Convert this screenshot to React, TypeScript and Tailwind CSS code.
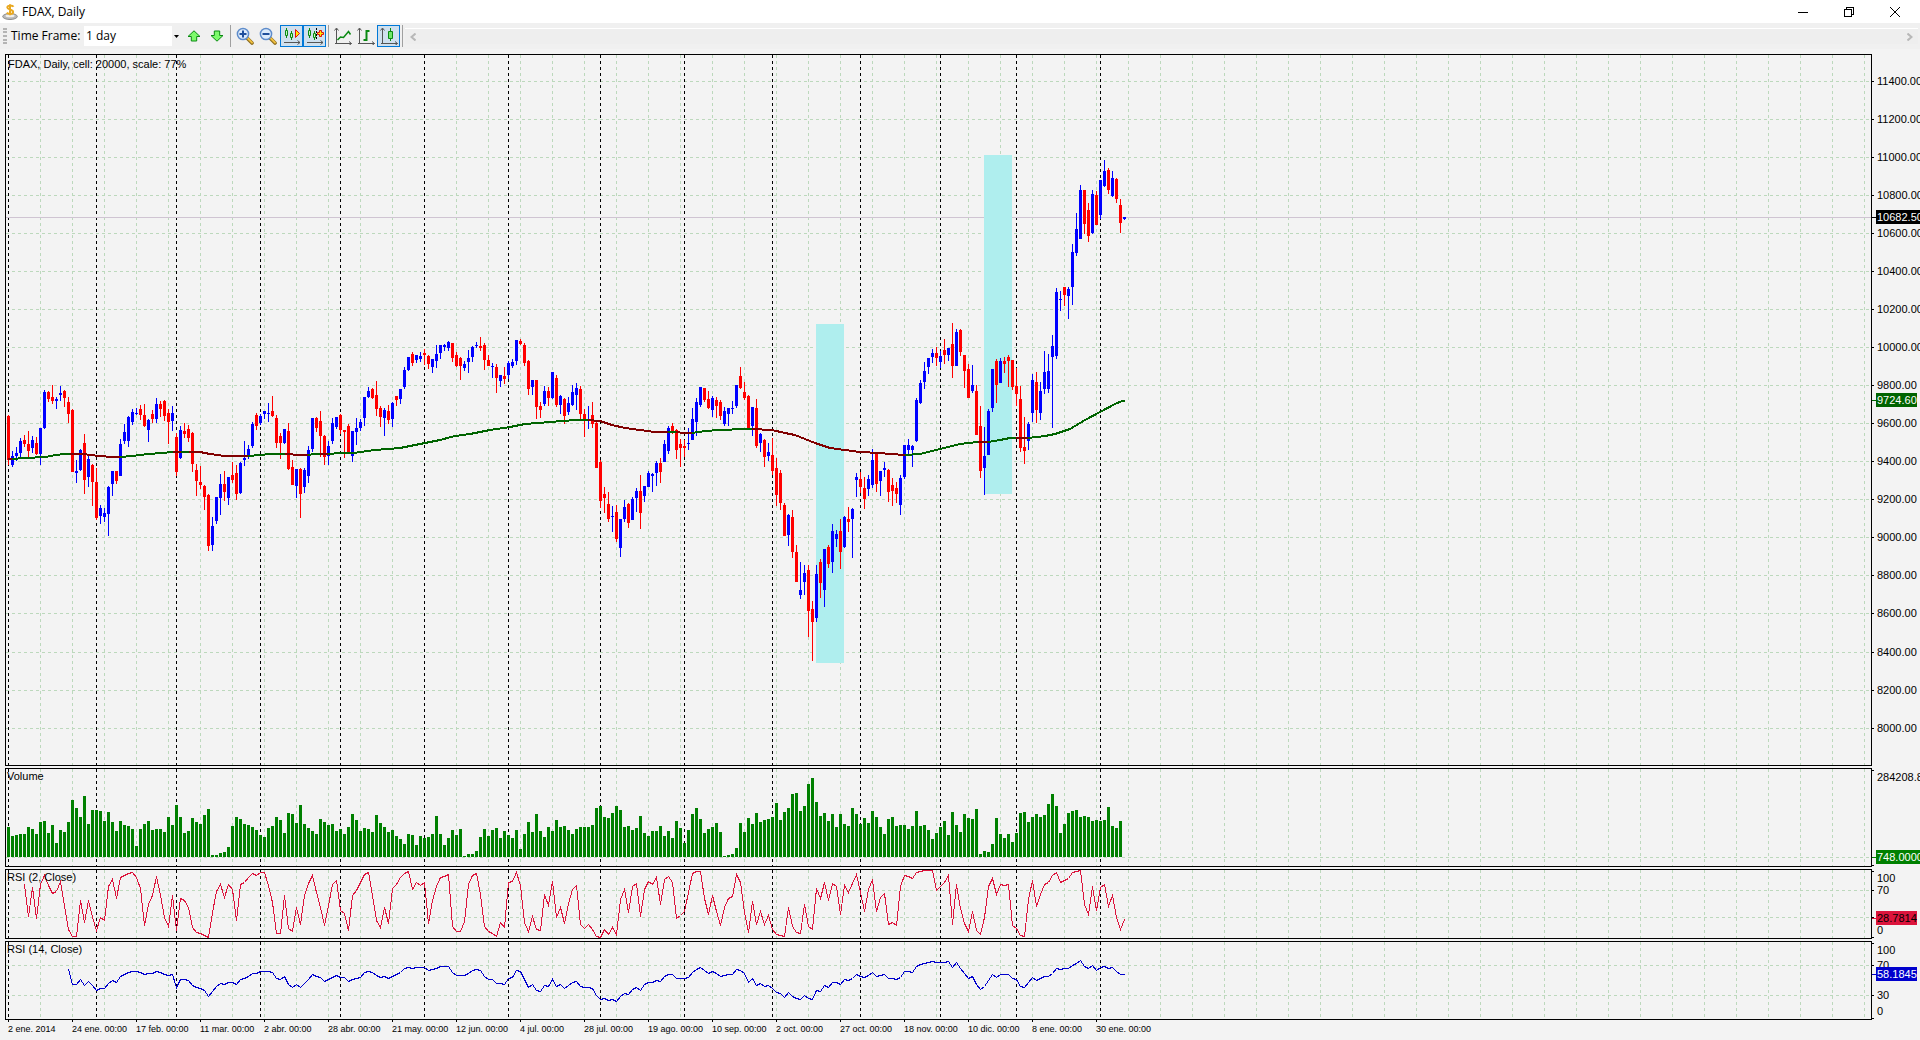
import { useState } from "react";
import type { ReactNode } from "react";

const STEP = 4; // pixels per bar
const FIRST = 2; // x of the first bar inside a plot

// direction, high, body top, body bottom, low
const CANDLES = `
r 415 416 460 465|b 451 456 465 467|b 447 453 456 461|b 438 441 453 458|r 435 440 444 447|r 431 444 451 457|b 436 440 448 453|r 437 443 454 455|b 428 428 454 465|b 390 392 428 429
r 391 392 399 402|r 385 397 401 404|b 397 399 401 409|b 386 393 395 401|r 390 391 398 407|r 397 402 414 423|r 409 410 472 472|b 460 471 473 483|b 449 450 470 471|r 434 443 480 494
b 455 459 477 487|r 464 465 482 506|r 468 482 518 520|b 505 508 516 524|b 508 513 517 522|b 486 487 514 536|b 471 471 484 496|r 471 471 481 484|b 439 444 476 476|b 424 432 441 444
b 416 417 441 447|b 409 412 422 425|b 408 413 414 415|r 405 409 415 420|r 404 415 426 427|b 419 420 430 442|r 410 414 419 423|b 398 404 419 423|r 401 404 409 417|r 400 401 416 421
r 409 413 422 444|b 406 413 421 431|r 433 437 472 476|b 426 430 458 459|r 423 431 434 438|r 425 429 438 442|r 432 433 464 472|r 464 470 481 496|r 466 482 485 489|r 485 486 497 510
r 494 495 546 551|b 517 526 545 551|b 497 497 521 524|b 474 484 498 515|r 471 484 492 501|b 477 477 498 505|r 462 475 480 483|r 465 473 494 500|b 462 463 493 494|b 441 458 460 466
b 445 449 456 459|b 422 424 446 448|r 413 415 426 430|b 414 416 423 425|b 411 411 414 419|b 403 413 414 422|r 396 411 416 417|r 415 418 443 448|r 433 436 443 459|b 429 429 443 444
r 423 431 469 470|r 460 467 485 485|b 469 469 486 498|r 468 469 494 518|b 468 470 487 493|b 446 450 476 483|b 418 418 449 452|r 417 418 428 432|r 411 421 436 457|r 435 436 457 465
b 441 446 456 465|b 418 423 441 444|b 417 417 427 429|r 414 415 430 434|r 430 430 432 458|r 424 426 452 453|b 431 431 456 462|b 418 428 432 445|b 419 422 428 431|b 397 397 418 426
b 387 391 397 398|r 388 389 398 399|r 381 395 409 416|r 406 408 417 427|b 408 410 418 436|r 405 411 420 424|b 402 403 419 427|r 396 396 400 406|b 389 389 399 404|b 367 370 387 389
b 357 357 370 371|r 352 354 363 366|b 355 355 360 363|b 352 356 359 362|r 349 353 355 365|r 355 356 364 369|b 359 359 367 373|b 345 354 361 368|b 345 345 353 359|b 344 345 347 351
b 341 342 348 351|r 343 343 358 362|r 352 355 366 367|r 357 358 366 380|b 361 364 368 371|b 350 358 362 373|b 346 347 357 362|b 342 345 346 348|r 337 346 348 351|r 343 345 360 370
r 355 360 366 366|b 363 366 367 378|r 364 367 378 393|b 375 375 381 387|r 367 376 379 384|b 361 363 375 379|b 359 362 366 368|b 340 340 361 365|r 339 341 344 345|r 343 345 363 366
r 360 361 389 395|b 380 380 387 395|r 380 380 407 419|r 402 406 410 418|b 386 391 404 406|r 387 391 398 406|b 372 372 398 399|r 375 378 405 407|b 395 396 405 414|r 398 399 416 424
b 397 403 412 415|b 385 392 405 406|b 383 388 395 410|r 386 389 414 419|r 409 414 419 437|b 406 419 420 429|r 402 415 424 428|r 422 423 468 468|r 460 462 501 508|r 487 494 498 513
r 492 504 519 522|b 506 516 517 532|r 505 512 539 542|b 519 519 548 557|b 500 507 519 522|r 503 504 523 528|b 497 499 520 520|b 488 491 498 512|r 475 491 513 529|b 486 486 496 502
b 471 473 487 487|b 473 474 476 492|b 461 463 473 486|r 458 463 472 483|b 440 444 462 462|b 426 428 451 454|r 423 426 431 434|r 429 430 450 459|r 439 444 448 467|r 440 446 448 457
b 428 443 444 450|b 408 419 440 440|b 398 402 422 436|b 387 387 405 407|r 388 388 400 402|r 391 399 408 409|b 396 398 410 417|r 397 400 406 418|r 400 402 416 420|b 407 411 424 426
b 408 408 414 426|b 401 408 409 414|b 385 385 406 408|r 367 376 388 389|r 382 392 398 400|r 395 396 429 429|b 407 407 426 436|r 399 408 446 448|b 433 434 443 452|r 439 440 457 467
b 443 452 456 461|r 438 455 471 475|r 458 468 495 506|r 470 473 503 510|r 503 505 536 536|b 514 515 535 546|r 510 517 552 558|r 545 552 582 582|b 562 590 595 599|b 565 573 582 595
r 565 570 611 637|r 601 609 622 661|b 565 574 618 622|r 559 562 583 598|b 549 549 590 607|r 545 547 564 568|b 524 531 562 573|b 530 534 539 547|r 519 531 552 569|b 516 517 547 548
r 507 519 522 532|b 508 509 519 558|b 473 477 480 497|r 472 479 487 493|r 477 488 499 509|b 475 479 489 496|b 449 460 485 488|r 453 454 484 492|b 471 471 481 496|b 462 468 470 477
r 469 470 492 502|r 478 485 491 506|r 482 488 494 503|b 475 478 505 515|b 445 445 477 479|b 439 445 450 454|b 445 446 450 467|b 398 400 441 442|b 380 383 403 404|b 362 371 382 389
b 358 358 367 374|b 349 353 357 363|r 347 353 358 366|b 351 356 362 368|r 339 350 355 364|b 348 348 355 361|r 323 344 366 378|b 329 332 366 366|r 329 330 352 356|r 355 355 371 388
r 364 369 398 398|b 365 385 391 393|r 385 391 435 435|r 406 426 471 478|b 427 456 468 495|b 409 411 455 455|b 369 369 408 412|r 359 361 385 403|b 358 361 383 383|r 357 361 364 373
r 355 357 361 387|r 360 360 387 390|r 368 386 394 406|r 386 399 448 452|r 417 447 451 464|b 422 424 441 450|b 374 380 413 422|r 372 382 410 423|b 382 391 413 420|b 351 372 389 394
b 354 371 389 393|b 335 346 357 428|b 288 292 356 359|b 291 299 300 311|r 287 287 295 306|b 287 289 296 319|b 244 252 287 305|b 213 229 253 256|b 185 190 239 239|r 190 190 224 234
r 203 210 236 242|b 190 194 233 234|r 191 195 225 225|b 180 180 215 219|b 160 171 186 187|r 168 170 190 194|b 171 178 196 197|r 178 179 199 203|r 199 205 223 233|b 217 217 219 220`
  .trim()
  .split(/[|\n]/)
  .map((row) => {
    const [dir, ...rest] = row.split(" ");
    const [high, top, bottom, low] = rest.map(Number);
    return { dir, high, top, bottom, low };
  });

const VOLUME = [
  30, 21, 22, 23, 23, 30, 28, 23, 35, 36, 24, 32, 14, 27, 25, 35, 57, 49, 40, 61, 33, 47, 47, 46, 36, 45, 35, 26, 36, 32,
  31, 28, 11, 28, 33, 36, 27, 28, 28, 25, 40, 32, 52, 40, 24, 26, 39, 35, 33, 42, 48, 2, 2, 4, 5, 10, 31, 40, 38, 33,
  32, 30, 27, 22, 20, 29, 31, 40, 37, 24, 44, 43, 34, 52, 33, 29, 26, 23, 38, 35, 32, 33, 26, 28, 23, 30, 43, 37, 26, 29,
  28, 25, 42, 34, 30, 25, 27, 21, 18, 13, 23, 22, 12, 21, 19, 20, 23, 41, 23, 12, 19, 27, 22, 28, 1, 3, 3, 6, 20, 28,
  21, 27, 29, 19, 26, 22, 19, 27, 8, 23, 35, 25, 43, 26, 20, 30, 26, 37, 30, 31, 27, 23, 28, 30, 30, 30, 32, 49, 51, 40,
  39, 44, 51, 47, 30, 31, 27, 29, 41, 24, 21, 26, 26, 31, 21, 26, 19, 36, 29, 14, 27, 43, 49, 38, 24, 28, 30, 34, 25, 1,
  2, 3, 9, 34, 25, 39, 33, 44, 35, 37, 38, 40, 54, 37, 45, 49, 63, 64, 46, 51, 73, 79, 55, 41, 44, 36, 43, 30, 43, 33,
  31, 49, 43, 33, 39, 34, 46, 40, 30, 23, 38, 40, 31, 32, 32, 28, 31, 46, 31, 32, 27, 18, 24, 30, 36, 22, 45, 32, 25, 43,
  39, 38, 48, 3, 6, 5, 13, 39, 23, 19, 23, 15, 24, 44, 45, 35, 40, 43, 40, 42, 53, 63, 51, 24, 33, 44, 46, 47, 40, 41,
  40, 36, 37, 36, 37, 50, 31, 29, 36,
];

const RSI_2 = [
  15, 47, 18, 49, 15, 6, 16, 24, 22, 12, 36, 60, 67, 67, 31, 53, 31, 48, 61, 48, 51, 17, 10, 29, 8, 6, 4, 3, 8, 19, 56,
  35, 26, 7, 26, 48, 57, 26, 61, 29, 31, 38, 58, 63, 64, 66, 68, 43, 22, 15, 28, 15, 20, 51, 15, 13, 8, 4, 6, 3, 3, 16,
  33, 64, 64, 26, 59, 62, 38, 55, 26, 14, 6, 23, 38, 56, 36, 15, 11, 41, 44, 61, 26, 21, 13, 5, 3, 26, 51, 58, 38, 54,
  19, 15, 8, 4, 2, 20, 13, 16, 13, 54, 31, 17, 8, 7, 5, 57, 62, 62, 52, 15, 6, 4, 25, 57, 62, 64, 67, 53, 58, 13, 12, 3,
  16, 53, 62, 47, 60, 61, 25, 36, 12, 48, 38, 54, 34, 20, 16, 55, 59, 55, 60, 67, 68, 60, 65, 58, 65, 30, 20, 43, 17, 14,
  47, 20, 12, 15, 8, 35, 10, 7, 13, 49, 46, 42, 23, 4, 2, 2, 29, 45, 26, 42, 56, 38, 29, 27, 5, 13, 43, 63, 32, 55, 42,
  55, 46, 60, 65, 66, 67, 38, 57, 63, 64, 35, 57, 60, 19, 29, 13, 31, 14, 17, 45, 16, 23, 14, 5, 23, 42, 20, 10, 42, 28,
  24, 55, 53, 56, 17, 6, 7, 9, 3, 2, 1, 1, 1, 21, 17, 13, 6, 55, 15, 39, 54, 62, 42, 61, 65, 48, 17, 9, 25, 15, 16, 15,
  56, 59, 66, 67, 30, 11, 37, 25, 15, 13, 6, 3, 13, 11, 9, 3, 2, 1, 35, 45, 17, 41, 18, 15, 37, 26, 48, 60, 50,
];

const RSI_14 = [
  28, 43, 43, 38, 44, 40, 44, 49, 47, 47, 42, 39, 41, 35, 33, 31, 30, 30, 31, 33, 32, 32, 30, 31, 33, 34, 33, 46, 38, 38,
  39, 44, 46, 47, 49, 55, 50, 45, 42, 43, 41, 41, 43, 38, 37, 35, 32, 32, 30, 30, 30, 31, 37, 38, 35, 43, 46, 43, 46, 42,
  38, 33, 35, 36, 40, 38, 36, 34, 36, 36, 40, 38, 37, 36, 31, 30, 31, 34, 36, 35, 37, 35, 33, 31, 27, 26, 27, 26, 26, 26,
  29, 28, 27, 25, 25, 25, 31, 34, 34, 34, 32, 29, 28, 29, 35, 38, 38, 42, 42, 43, 37, 36, 29, 30, 38, 46, 43, 49, 50, 44,
  45, 38, 45, 43, 47, 44, 41, 40, 45, 46, 46, 47, 54, 58, 57, 59, 58, 60, 55, 52, 53, 48, 46, 49, 43, 41, 41, 39, 40, 35,
  33, 33, 37, 37, 37, 36, 31, 28, 26, 29, 32, 30, 32, 35, 34, 33, 33, 28, 29, 32, 41, 37, 44, 42, 45, 44, 47, 51, 52, 56,
  51, 55, 57, 58, 54, 57, 58, 49, 50, 44, 46, 41, 41, 43, 38, 39, 37, 33, 35, 36, 34, 31, 35, 34, 33, 37, 37, 38, 36, 30,
  30, 31, 25, 23, 22, 21, 20, 21, 21, 21, 20, 26, 21, 27, 32, 37, 35, 43, 48, 45, 39, 33, 36, 33, 33, 33, 37, 38, 45, 46,
  41, 36, 39, 37, 35, 35, 32, 27, 28, 27, 27, 24, 22, 19, 25, 27, 24, 29, 26, 25, 27, 26, 30, 33, 33,
];

// The average is green while it rises and maroon while it falls
const AVERAGE = [
  { color: "#800000", points: "8,459 12,459" },
  { color: "#006400", points: "12,459 25,458 45,457 56,455 64,454 70,454" },
  { color: "#800000", points: "70,454 84,454 90,455 100,456 112,457 120,457" },
  { color: "#006400", points: "120,457 132,456 148,454 162,453 173,452" },
  { color: "#800000", points: "173,452 181,452" },
  { color: "#006400", points: "181,452 189,452" },
  { color: "#800000", points: "189,452 200,452 210,454 225,456 248,456" },
  { color: "#006400", points: "248,456 260,455 270,454 285,454" },
  { color: "#800000", points: "285,454 300,455 308,455" },
  { color: "#006400", points: "308,455 314,454 320,454" },
  { color: "#800000", points: "320,454 328,454" },
  {
    color: "#006400",
    points:
      "328,454 340,453 353,453 375,450 400,448 415,445 425,443 440,440 455,436 470,434 490,430 510,427 525,424 550,422 575,420 588,420",
  },
  { color: "#800000", points: "588,420 600,421 612,425 625,428 640,430 655,432 668,432" },
  { color: "#006400", points: "668,432 676,432" },
  { color: "#800000", points: "676,432 684,433 692,433" },
  { color: "#006400", points: "692,433 705,431 720,430 745,429 752,429" },
  {
    color: "#800000",
    points: "752,429 772,430 785,433 795,435 805,439 815,443 830,448 845,450 860,452 880,453 890,454 905,455",
  },
  { color: "#006400", points: "905,455 920,454 940,449 960,444 978,442" },
  { color: "#800000", points: "978,442 988,442" },
  { color: "#006400", points: "988,442 1000,440 1010,438 1016,438" },
  { color: "#800000", points: "1016,438 1028,438" },
  {
    color: "#006400",
    points: "1028,438 1045,436 1055,434 1070,429 1085,420 1100,412 1115,404 1122,401 1125,401",
  },
];

const GRID_COLUMNS = Array.from({ length: 120 }, (_, i) => 34 + i * 32);
const MONTHS = [2, 90, 170, 254, 334, 418, 502, 594, 678, 766, 854, 934, 1010, 1094];
const PRICE_ROWS = [26, 64, 102, 140, 178, 216, 254, 292, 330, 368, 406, 444, 482, 520, 558, 597, 635, 673];

const DATES = [
  "2 ene. 2014",
  "24 ene. 00:00",
  "17 feb. 00:00",
  "11 mar. 00:00",
  "2 abr. 00:00",
  "28 abr. 00:00",
  "21 may. 00:00",
  "12 jun. 00:00",
  "4 jul. 00:00",
  "28 jul. 00:00",
  "19 ago. 00:00",
  "10 sep. 00:00",
  "2 oct. 00:00",
  "27 oct. 00:00",
  "18 nov. 00:00",
  "10 dic. 00:00",
  "8 ene. 00:00",
  "30 ene. 00:00",
];

type Badge = { y: number; text: string; fill: string; ink?: string };

type PanelProps = {
  title: string;
  rows: number[];
  ticks: number[];
  labels: { y: number; text: string }[];
  badges: Badge[];
  size: string;
  titleX?: number;
  titleY?: number;
  children: ReactNode;
};

// One plot with its grid, its title and the value scale on the right
const Panel = ({ title, rows, ticks, labels, badges, size, titleX = 1, titleY = 11, children }: PanelProps) => (
  <section className={`flex ${size}`} aria-label={title}>
    <div className="flex min-w-0 flex-1 border border-black">
      <svg className="min-w-0 flex-1 overflow-hidden" shapeRendering="crispEdges">
        <g stroke="#bcd8bc" strokeDasharray="3 3">
          {rows.map((y) => (
            <line key={y} x1="0" x2="100%" y1={y + 0.5} y2={y + 0.5} />
          ))}
          {GRID_COLUMNS.map((x) => (
            <line key={x} x1={x + 0.5} x2={x + 0.5} y1="0" y2="100%" />
          ))}
        </g>
        <g stroke="#000000" strokeDasharray="3 3">
          {MONTHS.map((x) => (
            <line key={x} x1={x + 0.5} x2={x + 0.5} y1="0" y2="100%" />
          ))}
        </g>
        {children}
        <text x={titleX} y={titleY} fontSize="11" fill="#000000">
          {title}
        </text>
      </svg>
    </div>
    <svg className="w-12 shrink-0 overflow-hidden" shapeRendering="crispEdges" fontSize="11">
      {ticks.map((y) => (
        <rect key={y} x="0" y={y} width="2" height="1" fill="#000000" />
      ))}
      {labels.map((label) => (
        <text key={label.text} x="5" y={label.y} fill="#000000">
          {label.text}
        </text>
      ))}
      {badges.map((badge) => (
        <g key={badge.text}>
          <rect x="0" y={badge.y + 7} width="4" height="1" fill={badge.fill} />
          <rect x="4" y={badge.y} width={badge.text.length > 7 ? 44 : 41} height="14" fill={badge.fill} />
          <text x="5" y={badge.y + 11} fill={badge.ink ?? "#ffffff"}>
            {badge.text}
          </text>
        </g>
      ))}
    </svg>
  </section>
);

const linePoints = (values: number[], start: number) =>
  values.map((v, i) => `${FIRST + (start + i) * STEP + 0.5},${v + 0.5}`).join(" ");

const AppIcon = () => (
  <svg width="16" height="16" viewBox="0 0 16 16">
    <ellipse cx="8" cy="12.5" rx="7.3" ry="3" fill="#b9b9b9" stroke="#8c8c8c" />
    <ellipse cx="8" cy="11.8" rx="4.5" ry="1.5" fill="#eeeeee" />
    <path
      d="M11.5 2.8C10.5 1.2 5.3 1 5.3 3.6c0 2.2 5.8 1.6 5.8 4.3 0 2.6-5 2.6-6.3 0.7M8 0.3v11"
      fill="none"
      stroke="#e9a820"
      strokeWidth="2"
    />
  </svg>
);

const Arrow = ({ flip }: { flip?: boolean }) => (
  <svg className={flip ? "rotate-180" : ""} width="14" height="12" viewBox="0 0 14 12">
    <path d="M7 0.8 13 6.5H9.7V11H4.3V6.5H1Z" fill="#7dfb6b" stroke="#0a8a12" />
  </svg>
);

const Magnifier = ({ plus }: { plus?: boolean }) => (
  <svg width="18" height="18" viewBox="0 0 18 18">
    <path d="m11 11 5 5" stroke="#8a6a1c" strokeWidth="3.6" strokeLinecap="round" />
    <path d="m11.5 11 4.5 4.6" stroke="#f0c040" strokeWidth="2" strokeLinecap="round" />
    <circle cx="7" cy="7" r="5.6" fill="#dcebfb" stroke="#5e8ccb" strokeWidth="1.5" />
    <path d={plus ? "M3.5 7h7M7 3.5v7" : "M3.5 7h7"} stroke="#1f4f9c" strokeWidth="2" />
  </svg>
);

const MiniCandles = () => (
  <>
    <path d="M3.5 1v10M8.5 4v9" stroke="#0a8a12" />
    <path d="M2.5 3.5h2v5h-2zM7.5 6.5h2v4h-2z" fill="#c9f5c4" stroke="#0a8a12" />
    <path d="M1 15.5h16M14.5 13.5l2.5 2-2.5 2" fill="none" stroke="#555555" />
  </>
);

const ScrollIcon = () => (
  <svg width="18" height="18" viewBox="0 0 18 18">
    <MiniCandles />
    <path d="M12.5 2.5v8l4-4z" fill="#ffe800" stroke="#e01010" />
  </svg>
);

const ShiftIcon = () => (
  <svg width="18" height="18" viewBox="0 0 18 18">
    <MiniCandles />
    <path d="M10.5 1v12" stroke="#000000" strokeDasharray="2 1" />
    <path d="M13.5 3.5h2v2h2v2h-2v2h-2v-2h-2v-2h2z" fill="#ffe800" stroke="#e01010" />
  </svg>
);

const Axes = () => (
  <path d="M2.5 17V1.5M0.5 3.5l2-2.5 2 2.5M1 16.5h16.5M15 14.5l2.5 2-2.5 2" fill="none" stroke="#555555" />
);

const LineIcon = () => (
  <svg width="18" height="18" viewBox="0 0 18 18">
    <Axes />
    <path d="m3.5 13 3-3 3 0.5 5-6 2 3" fill="none" stroke="#0a8a12" strokeWidth="1.5" />
  </svg>
);

const BarIcon = () => (
  <svg width="18" height="18" viewBox="0 0 18 18">
    <Axes />
    <path d="M9.5 3v11M6.5 13h3M9.5 4h3" fill="none" stroke="#0a8a12" strokeWidth="2" />
  </svg>
);

const CandleIcon = () => (
  <svg width="18" height="18" viewBox="0 0 18 18">
    <Axes />
    <path d="M10.5 1v13" stroke="#0a8a12" />
    <path d="M8.5 4.5h4v7h-4z" fill="#6fe868" stroke="#0a8a12" />
  </svg>
);

type ToolButtonProps = {
  label: string;
  pressed?: boolean;
  onClick?: () => void;
  children: ReactNode;
};

const ToolButton = ({ label, pressed, onClick, children }: ToolButtonProps) => (
  <button
    type="button"
    aria-label={label}
    aria-pressed={pressed}
    onClick={onClick}
    className={`flex h-[22px] w-[23px] items-center justify-center ${
      pressed ? "border border-[#0078d7] bg-[#cfe0ee]" : ""
    }`}
  >
    {children}
  </button>
);

const Separator = () => <span className="mx-0.5 h-[22px] w-px bg-[#a0a0a0]" />;

const TitleBar = () => (
  <header className="flex h-[23px] items-center bg-white pr-0.5 pl-0.5">
    <AppIcon />
    <h1 className="ml-1 flex-1 font-['Open_Sans',sans-serif] text-[12px]">FDAX, Daily</h1>
    <button type="button" aria-label="Minimize" className="flex h-full w-[46px] items-center justify-center">
      <svg width="10" height="10" shapeRendering="crispEdges">
        <path d="M0 5.5h10" stroke="#000000" />
      </svg>
    </button>
    <button type="button" aria-label="Restore" className="flex h-full w-[46px] items-center justify-center">
      <svg width="10" height="10" shapeRendering="crispEdges">
        <path d="M0.5 2.5h7v7h-7zM2.5 2V0.5h7v7H8" fill="none" stroke="#000000" />
      </svg>
    </button>
    <button type="button" aria-label="Close" className="flex h-full w-[46px] items-center justify-center">
      <svg width="10" height="10">
        <path d="m0 0 10 10M10 0 0 10" stroke="#000000" />
      </svg>
    </button>
  </header>
);

const Toolbar = () => {
  const [style, setStyle] = useState("candles");
  const [autoScroll, setAutoScroll] = useState(true);
  const [shift, setShift] = useState(true);

  return (
    <div className="flex h-[26px] items-center bg-[#f0f0f0] pl-[3px]">
      <span className="mr-1 h-4 w-1 border-x-2 border-dotted border-[#b4b4b4]" />
      <label htmlFor="frame" className="w-[73px] font-['Open_Sans',sans-serif] text-[12px] whitespace-nowrap">
        Time Frame:
      </label>
      <div className="relative mr-px">
        <select
          id="frame"
          defaultValue="day"
          className="block h-5 w-[97px] appearance-none bg-white pl-0.5 font-['Open_Sans',sans-serif] text-[12px] leading-5"
        >
          <option value="hour">1 hour</option>
          <option value="day">1 day</option>
          <option value="week">1 week</option>
        </select>
        <span className="pointer-events-none absolute inset-y-0 right-0 flex w-[9px] items-center justify-center bg-[#f0f0f0]">
          <svg width="5" height="3">
            <path d="M0 0h5L2.5 3z" fill="#000000" />
          </svg>
        </span>
      </div>
      <ToolButton label="Larger time frame">
        <Arrow />
      </ToolButton>
      <ToolButton label="Smaller time frame">
        <Arrow flip />
      </ToolButton>
      <Separator />
      <div className="mr-px flex">
        <ToolButton label="Zoom in">
          <Magnifier plus />
        </ToolButton>
        <ToolButton label="Zoom out">
          <Magnifier />
        </ToolButton>
      </div>
      <ToolButton label="Auto scroll" pressed={autoScroll} onClick={() => setAutoScroll(!autoScroll)}>
        <ScrollIcon />
      </ToolButton>
      <ToolButton label="Chart shift" pressed={shift} onClick={() => setShift(!shift)}>
        <ShiftIcon />
      </ToolButton>
      <Separator />
      <ToolButton label="Line chart" pressed={style === "line"} onClick={() => setStyle("line")}>
        <LineIcon />
      </ToolButton>
      <ToolButton label="Bar chart" pressed={style === "bars"} onClick={() => setStyle("bars")}>
        <BarIcon />
      </ToolButton>
      <ToolButton label="Candles" pressed={style === "candles"} onClick={() => setStyle("candles")}>
        <CandleIcon />
      </ToolButton>
      <Separator />
      <div className="mr-0.5 flex h-4 flex-1 items-center justify-between border-t border-white bg-[#eeeeee] px-[5px]">
        <button type="button" aria-label="Scroll left">
          <svg width="6" height="8" fill="none" stroke="#b8b8b8" strokeWidth="2">
            <path d="M5.5 0.5 1.5 4l4 3.5" />
          </svg>
        </button>
        <button type="button" aria-label="Scroll right">
          <svg width="6" height="8" fill="none" stroke="#b8b8b8" strokeWidth="2">
            <path d="m0.5 0.5 4 3.5-4 3.5" />
          </svg>
        </button>
      </div>
    </div>
  );
};

const App = () => {
  return (
    <div className="flex min-h-screen flex-col bg-[#f3f3f3] font-['Liberation_Sans',Arial,sans-serif] text-black">
      <TitleBar />
      <Toolbar />

      <main className="flex flex-1 flex-col gap-0.5 overflow-hidden pt-[5px] pl-[5px]">
        <Panel
          title="FDAX, Daily, cell: 20000, scale: 77%"
          titleX={2}
          titleY={13}
          size="min-h-[700px] flex-1"
          rows={PRICE_ROWS}
          ticks={PRICE_ROWS.map((y) => y + 1)}
          labels={PRICE_ROWS.map((y, i) => ({ y: y + 5, text: `${11400 - i * 200}.00` }))}
          badges={[
            { y: 156, text: "10682.50", fill: "#000000" },
            { y: 339, text: "9724.60", fill: "#006400" },
          ]}
        >
          <rect x="0" y="162" width="100%" height="1" fill="#cfc4d2" />
          <g transform="translate(-6 -55)">
            <rect x="816" y="324" width="28" height="339" fill="#afeeee" />
            <rect x="984" y="155" width="28" height="339" fill="#afeeee" />
          </g>
          <g transform="translate(0 -55)">
            {CANDLES.map((c, i) => (
              <g key={i} fill={c.dir === "r" ? "#ff0000" : "#0000ff"}>
                <rect x={FIRST + i * STEP} y={c.high} width="1" height={c.low - c.high} />
                <rect x={FIRST + i * STEP - 1} y={c.top} width="3" height={c.bottom - c.top} />
              </g>
            ))}
          </g>
          <g transform="translate(-6 -55)" fill="none" strokeWidth="2">
            {AVERAGE.map((part) => (
              <polyline key={part.points} points={part.points} stroke={part.color} />
            ))}
          </g>
        </Panel>

        <Panel
          title="Volume"
          size="h-[99px]"
          rows={[88]}
          ticks={[2, 97]}
          labels={[{ y: 13, text: "284208.8" }]}
          badges={[{ y: 82, text: "748.0000", fill: "#008000" }]}
        >
          <g fill="#008000">
            {VOLUME.map((v, i) => (
              <rect key={i} x={FIRST + i * STEP - 1} y={88 - v} width="3" height={v} />
            ))}
          </g>
        </Panel>

        <Panel
          title="RSI (2, Close)"
          size="h-[70px]"
          rows={[20, 47]}
          ticks={[2, 21, 48, 68]}
          labels={[
            { y: 13, text: "100" },
            { y: 25, text: "70" },
            { y: 65, text: "0" },
          ]}
          badges={[{ y: 42, text: "28.7814", fill: "#dc143c", ink: "#000000" }]}
        >
          <polyline points={linePoints(RSI_2, 4)} transform="translate(0 -1)" fill="none" stroke="#dc143c" />
        </Panel>

        <Panel
          title="RSI (14, Close)"
          size="h-[79px]"
          rows={[23, 53]}
          ticks={[2, 24, 54, 77]}
          labels={[
            { y: 13, text: "100" },
            { y: 28, text: "70" },
            { y: 58, text: "30" },
            { y: 74, text: "0" },
          ]}
          badges={[{ y: 26, text: "58.1845", fill: "#0000cd" }]}
        >
          <polyline points={linePoints(RSI_14, 15)} transform="translate(0 -1)" fill="none" stroke="#0000cd" />
        </Panel>
      </main>

      <footer className="flex h-5 pl-2">
        {DATES.map((date) => (
          <div key={date} className="w-16 shrink-0">
            <div className="h-0.5 w-px bg-black" />
            <span className="block text-[9px] leading-[14px] whitespace-nowrap">{date}</span>
          </div>
        ))}
      </footer>
    </div>
  );
};

export default App;
